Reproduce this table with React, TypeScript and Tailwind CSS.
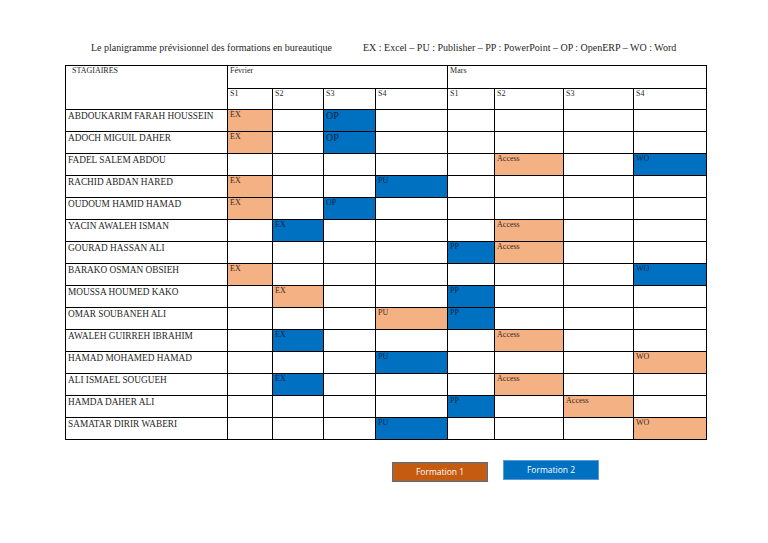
import React from "react";

type Cell = { c: number; t: string; k: "o" | "b"; big?: boolean };

const rows: { name: string; cells: Cell[] }[] = [
  { name: "ABDOUKARIM FARAH HOUSSEIN", cells: [{ c: 0, t: "EX", k: "o" }, { c: 2, t: "OP", k: "b", big: true }] },
  { name: "ADOCH MIGUIL DAHER", cells: [{ c: 0, t: "EX", k: "o" }, { c: 2, t: "OP", k: "b", big: true }] },
  { name: "FADEL SALEM ABDOU", cells: [{ c: 5, t: "Access", k: "o" }, { c: 7, t: "WO", k: "b" }] },
  { name: "RACHID ABDAN HARED", cells: [{ c: 0, t: "EX", k: "o" }, { c: 3, t: "PU", k: "b" }] },
  { name: "OUDOUM HAMID HAMAD", cells: [{ c: 0, t: "EX", k: "o" }, { c: 2, t: "OP", k: "b" }] },
  { name: "YACIN AWALEH ISMAN", cells: [{ c: 1, t: "EX", k: "b" }, { c: 5, t: "Access", k: "o" }] },
  { name: "GOURAD HASSAN ALI", cells: [{ c: 4, t: "PP", k: "b" }, { c: 5, t: "Access", k: "o" }] },
  { name: "BARAKO OSMAN OBSIEH", cells: [{ c: 0, t: "EX", k: "o" }, { c: 7, t: "WO", k: "b" }] },
  { name: "MOUSSA HOUMED KAKO", cells: [{ c: 1, t: "EX", k: "o" }, { c: 4, t: "PP", k: "b" }] },
  { name: "OMAR SOUBANEH ALI", cells: [{ c: 3, t: "PU", k: "o" }, { c: 4, t: "PP", k: "b" }] },
  { name: "AWALEH GUIRREH IBRAHIM", cells: [{ c: 1, t: "EX", k: "b" }, { c: 5, t: "Access", k: "o" }] },
  { name: "HAMAD MOHAMED HAMAD", cells: [{ c: 3, t: "PU", k: "b" }, { c: 7, t: "WO", k: "o" }] },
  { name: "ALI ISMAEL SOUGUEH", cells: [{ c: 1, t: "EX", k: "b" }, { c: 5, t: "Access", k: "o" }] },
  { name: "HAMDA DAHER ALI", cells: [{ c: 4, t: "PP", k: "b" }, { c: 6, t: "Access", k: "o" }] },
  { name: "SAMATAR DIRIR WABERI", cells: [{ c: 3, t: "PU", k: "b" }, { c: 7, t: "WO", k: "o" }] },
];

const widths = [162, 45, 51, 52, 72, 47, 69, 70, 73];

export default function App() {
  return (
    <div
      className="w-[768px] h-[543px] bg-white pl-[65px] text-[#1f1f1f]"
      style={{ fontFamily: '"Liberation Serif", "Times New Roman", serif' }}
    >
      <div className="pt-[42px] h-[65px] flex text-[10px] leading-[12px]">
        <span className="ml-[26px] w-[272px] shrink-0">Le planigramme prévisionnel des formations en bureautique</span>
        <span>EX : Excel – PU : Publisher – PP : PowerPoint – OP : OpenERP – WO : Word</span>
      </div>
      <table className="table-fixed border-collapse w-[642px]">
        <colgroup>
          {widths.map((w, i) => (
            <col key={i} style={{ width: w }} />
          ))}
        </colgroup>
        <tbody>
          <tr className="h-[23px]">
            <td rowSpan={2} className="border border-black align-top pl-[6px] pt-0 text-[8px] leading-[10px]">
              STAGIAIRES
            </td>
            <td colSpan={4} className="border border-black align-top pl-[2px] text-[8px] leading-[10px]">
              Février
            </td>
            <td colSpan={4} className="border border-black align-top pl-[2px] text-[8px] leading-[10px]">
              Mars
            </td>
          </tr>
          <tr className="h-[21px]">
            {["S1", "S2", "S3", "S4", "S1", "S2", "S3", "S4"].map((s, i) => (
              <td key={i} className="border border-black align-top pl-[2px] text-[8px] leading-[10px]">
                {s}
              </td>
            ))}
          </tr>
          {rows.map((r) => (
            <tr key={r.name} className="h-[22px]">
              <td className="border border-black align-top pl-[2px] text-[9.3px] leading-[12px] whitespace-nowrap">
                {r.name}
              </td>
              {Array.from({ length: 8 }).map((_, i) => {
                const cell = r.cells.find((x) => x.c === i);
                const bg = cell ? (cell.k === "o" ? "bg-[#f4b183]" : "bg-[#0070c0]") : "";
                const size = cell && cell.big ? "text-[10px] leading-[12px]" : "text-[8px] leading-[9px]";
                return (
                  <td
                    key={i}
                    className={`border border-black align-top pl-[2px] ${size} ${bg} ${cell && cell.k === "b" ? "text-[#0d2440]" : "text-[#3a2a20]"}`}
                  >
                    {cell ? cell.t : ""}
                  </td>
                );
              })}
            </tr>
          ))}
        </tbody>
      </table>
      <div
        className="flex items-start pl-[327px] mt-[20px]"
        style={{ fontFamily: '"Open Sans", "Liberation Sans", sans-serif' }}
      >
        <div className="mt-[2px] w-[96px] h-[20px] bg-[#c55a11] border border-[#41719c] text-white text-[8.5px] flex items-center justify-center">
          Formation 1
        </div>
        <div className="ml-[15px] w-[96px] h-[20px] bg-[#0070c0] border border-[#5b9bd5] text-white text-[8.5px] flex items-center justify-center">
          Formation 2
        </div>
      </div>
    </div>
  );
}
